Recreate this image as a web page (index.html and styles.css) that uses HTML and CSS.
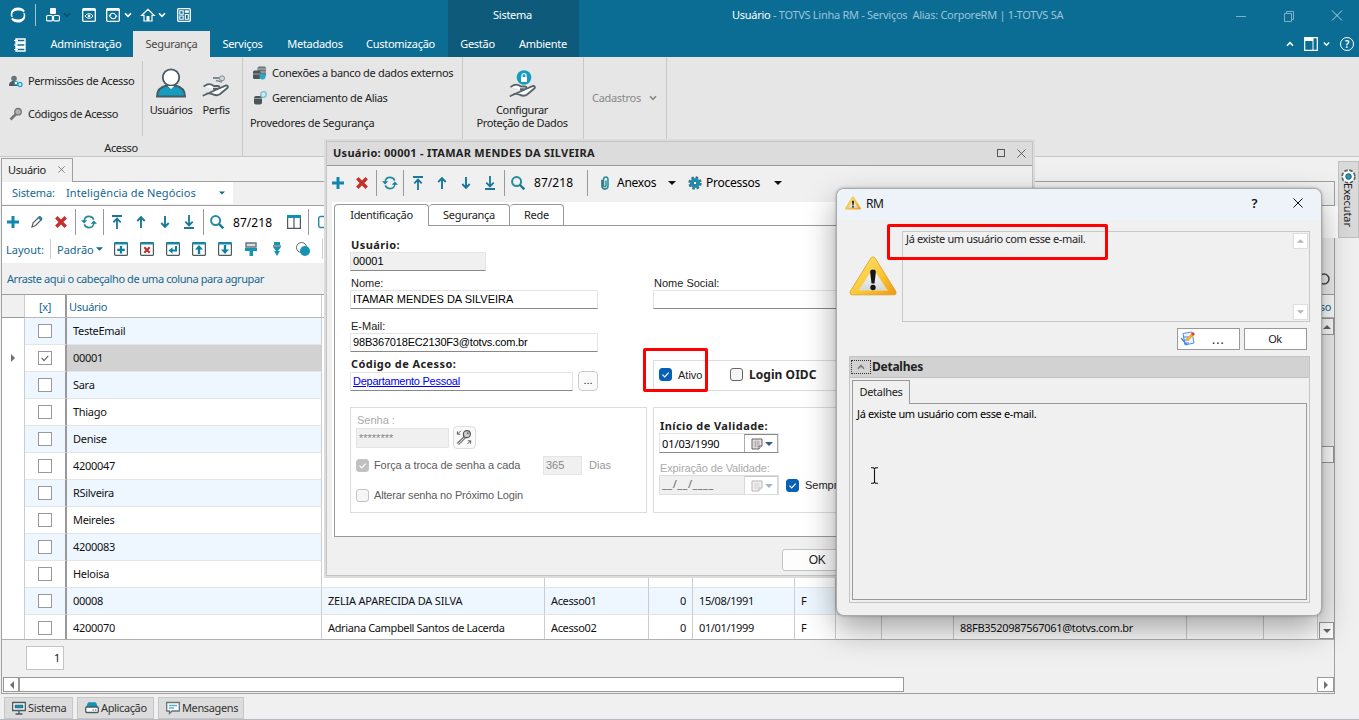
FILE: index.html
```html
<!DOCTYPE html>
<html lang="pt-BR">
<head>
<meta charset="utf-8">
<title>TOTVS Linha RM - Serviços</title>
<link rel="stylesheet" href="styles.css">
</head>
<body>
<svg class="defs" width="0" height="0">
  <symbol id="chev" viewBox="0 0 8 6"><path d="M1 1.2 4 4.4 7 1.2" fill="none" stroke="currentColor" stroke-width="1.6"/></symbol>
  <symbol id="tri" viewBox="0 0 8 4"><path d="M0 0h8L4 4z" fill="currentColor"/></symbol>
  <symbol id="plus" viewBox="0 0 12 12"><path d="M6 0v12M0 6h12" stroke="#1186ae" stroke-width="3"/></symbol>
  <symbol id="del" viewBox="0 0 12 12"><path d="M1.3 1.3l9.4 9.4M10.7 1.3l-9.4 9.4" stroke="#c4302b" stroke-width="3.4"/></symbol>
  <symbol id="sync" viewBox="0 0 16 14"><g fill="none" stroke="#258c9c" stroke-width="1.6"><path d="M3.200 6C3.400 3 5.500 1.400 8 1.400c2.300 0 4 1.300 4.700 3.200M12.800 8C12.600 11 10.500 12.600 8 12.600c-2.300 0-4-1.300-4.700-3.200"/></g><path d="M0 5.200h6.300L3.100 8.400zM16 8.800H9.700l3.200-3.200z" fill="#1b7fa0"/></symbol>
  <symbol id="up" viewBox="0 0 12 14"><path d="M6 13V2.500M2.300 6 6 2.200 9.700 6" fill="none" stroke="#1a7799" stroke-width="1.900"/></symbol>
  <symbol id="down" viewBox="0 0 12 14"><path d="M6 1v10.500M2.300 8 6 11.800 9.700 8" fill="none" stroke="#1a7799" stroke-width="1.900"/></symbol>
  <symbol id="top" viewBox="0 0 12 14"><path d="M1 1h10M6 14V4M2.300 7.300 6 3.600l3.700 3.700" fill="none" stroke="#1a7799" stroke-width="1.800"/></symbol>
  <symbol id="bottom" viewBox="0 0 12 14"><path d="M1 13h10M6 0v10M2.300 6.700 6 10.400l3.700-3.700" fill="none" stroke="#1a7799" stroke-width="1.800"/></symbol>
  <symbol id="search" viewBox="0 0 14 14"><circle cx="5.600" cy="5.600" r="4.500" fill="none" stroke="#258c9c" stroke-width="2"/><path d="m9 9 4.300 4.300" stroke="#1a7799" stroke-width="2.400"/></symbol>
  <symbol id="frame" viewBox="0 0 14 14"><rect x=".6" y=".6" width="12.800" height="12.800" rx="1" fill="#fff" stroke="#4a5a5e" stroke-width="1.200"/><path d="M0 1.500h14" stroke="#0f8fb4" stroke-width="2"/></symbol>
  <symbol id="hand" viewBox="0 0 28 14"><path d="M1.500 3.500 5 1.500C8 .5 10 1.500 12 3h4c2 .3 2 2.600 0 2.800h-5M17 5.500l6.500-2.800c2-.6 3 1 1.800 2.300l-7.500 6.300c-1.600 1-4 1.200-6.500.2C8 10 6.500 9.500 4.500 11l-3 1.500z" fill="#fff" stroke="#566468" stroke-width="1.900" stroke-linejoin="round"/></symbol>
  <symbol id="gear" viewBox="0 0 14 14"><circle cx="7" cy="7" r="5.500" fill="none" stroke="currentColor" stroke-width="2.400" stroke-dasharray="2.520 1.800"/><circle cx="7" cy="7" r="5.100" fill="#158fb6"/><circle cx="7" cy="7" r="1.800" fill="#fff" stroke="#34525e" stroke-width=".8"/></symbol>
  <symbol id="check" viewBox="0 0 13 13"><path d="m3.500 6.600 2.200 2.200 4-4.200" fill="none" stroke="currentColor" stroke-width="1.200"/></symbol>
  <symbol id="close" viewBox="0 0 10 10"><path d="m.5.5 9 9m0-9-9 9" stroke="currentColor" stroke-width="1"/></symbol>
  <symbol id="calendar" viewBox="0 0 12 12"><path d="M1 1h10v7l-3 3H1z" fill="#e6e2e2" stroke="#6b5f66"/><path d="M2.500 4h6.500M2.500 6h6.500M2.500 8h5M4.500 2.500v7M7 2.500v7" stroke="#999" stroke-width=".6"/><path d="M8 11V8h3" fill="#fff" stroke="#6b5f66"/></symbol>
  <symbol id="warn" viewBox="0 0 48 40">
    <linearGradient id="gold" x2="1" y2="1"><stop stop-color="#ffe779"/><stop offset=".55" stop-color="#fbc838"/><stop offset="1" stop-color="#ee9a10"/></linearGradient>
    <linearGradient id="pearl" x2="0" y2="1"><stop stop-color="#fff"/><stop offset="1" stop-color="#d4d7da"/></linearGradient>
    <path d="M24 1c1.300 0 2 .8 2.700 2L46.500 35c1.300 2.200.4 3.800-2 3.800h-41c-2.400 0-3.300-1.600-2-3.800L21.300 3C22 1.800 22.700 1 24 1z" fill="url(#gold)" stroke="#d99b1c" stroke-width=".8"/>
    <path d="M24 12 38.500 34.500h-29z" fill="url(#pearl)" stroke="#f6d36b" stroke-width=".6"/>
    <path d="M24 13.500c2.300 0 3 1.200 2.800 3.200l-1.300 10.800h-3l-1.300-10.800c-.2-2 .5-3.200 2.800-3.200z" fill="#161616"/><circle cx="24" cy="31.500" r="2.700" fill="#161616"/>
  </symbol>
</svg>

<div class="app">
  <header class="header">
    <div class="head-left">
      <div class="quick">
        <svg class="q-logo" viewBox="0 0 16 16"><path d="M1.300 4C3 1.500 5.200.4 8 .4s5.300 1.100 6.700 3.300L14 5.300C12 4 10.200 3.600 8 3.600 5.300 3.600 3 4.400 2.300 7c-.2 1.300 0 2.300.6 3.300L1 9.500C.6 7.500.7 5.700 1.300 4z" fill="#fff"/><path d="M14.700 12c-1.700 2.500-3.900 3.600-6.700 3.600s-5.300-1.100-6.700-3.300L2 10.700c2 1.300 3.800 1.700 6 1.700 2.700 0 5-.8 5.700-3.400.2-1.300 0-2.300-.6-3.300l1.900.8c.4 2 .3 3.800-.3 5.500z" fill="#fff"/></svg>
        <i class="q-sep"></i>
        <svg class="q-cubes" viewBox="0 0 14 14"><rect x="4" y="0" width="6" height="6" rx="1" fill="#fff"/><rect x=".6" y="7.500" width="5.800" height="5.400" rx="1" fill="none" stroke="#fff" stroke-width="1.100"/><rect x="7.600" y="7.500" width="5.800" height="5.400" rx="1" fill="none" stroke="#fff" stroke-width="1.100"/></svg>
        <svg class="q-chev dark"><use href="#chev"/></svg>
        <svg class="q-eye" viewBox="0 0 14 14"><rect x=".7" y=".7" width="12.600" height="12.600" rx="1" fill="none" stroke="#fff" stroke-width="1.300"/><path d="M1 1.700h12" stroke="#fff" stroke-width="2.200"/><path d="M3 8c2-3 6-3 8 0-2 3-6 3-8 0z" fill="none" stroke="#fff"/><circle cx="7" cy="8" r="1.300" fill="#fff"/></svg>
        <svg class="q-sync" viewBox="0 0 14 14"><rect x=".7" y=".7" width="12.600" height="12.600" rx="1" fill="none" stroke="#fff" stroke-width="1.300"/><path d="M1 1.700h12" stroke="#fff" stroke-width="2.200"/><path d="M4 8c0-3.500 4.500-3.500 5.500-1M10 8c0 3.500-4.500 3.500-5.500 1" fill="none" stroke="#fff" stroke-width="1.100"/><path d="M2.300 7.500h3L4 9.300zM8.700 8.500h3L10 6.700z" fill="#fff"/></svg>
        <svg class="q-chev"><use href="#chev"/></svg>
        <svg class="q-home" viewBox="0 0 14 14"><path d="M.8 7.300 7 1.300l6.200 6H11V13H3V7.300z" fill="none" stroke="#fff" stroke-width="1.200"/><path d="M5.500 13V8h3v5z" fill="#fff"/></svg>
        <svg class="q-chev"><use href="#chev"/></svg>
        <svg class="q-grid" viewBox="0 0 14 14"><rect x=".7" y=".7" width="12.600" height="12.600" rx="1" fill="none" stroke="#fff" stroke-width="1.300"/><path d="M2.800 2.800h3.400v3.400H2.800zM2.800 8h3.400v3.200H2.800zM8.300 6.500h3v4.700h-3z" fill="none" stroke="#fff" stroke-width="1.100"/><path d="M7.800 2.300h4v2.500h-4z" fill="#fff"/></svg>
      </div>
      <nav class="tabs">
        <span class="tab-menu"><svg viewBox="0 0 12 14"><path d="M2 1h9v3H2zM2 5.500h9v3H2zM2 10h9v3H2z" fill="none" stroke="#fff" stroke-width="1.400"/><path d="M0 2.500h4M0 7h4M0 11.500h4" stroke="#fff" stroke-width="1.200"/></svg></span>
        <span class="tab w-adm">Administração</span><span class="tab w-seg on">Segurança</span><span class="tab w-ser">Serviços</span><span class="tab w-met">Metadados</span><span class="tab w-cus">Customização</span>
      </nav>
    </div>
    <div class="context">
      <div class="context-title">Sistema</div>
      <nav class="tabs"><span class="tab w-ges">Gestão</span><span class="tab w-amb">Ambiente</span></nav>
    </div>
    <div class="head-right">
      <div class="titlebar">
        <div class="title"><b>Usuário</b> - TOTVS Linha RM - Serviços &nbsp;Alias: CorporeRM | 1-TOTVS SA</div>
        <svg class="win" viewBox="0 0 12 12"><path d="M1 6.500h10" stroke="currentColor"/></svg>
        <svg class="win" viewBox="0 0 12 12"><path d="M1.500 3.500h7v8h-7zM3.500 3V1.500h7v8H9" fill="none" stroke="currentColor"/></svg>
        <svg class="win big" viewBox="0 0 12 12"><path d="m1 1 10 10M11 1 1 11" stroke="currentColor"/></svg>
      </div>
      <div class="tools">
        <svg class="q-chev flip"><use href="#chev"/></svg>
        <svg class="t-pane" viewBox="0 0 14 14"><path d="M.7.700h12.600v12.600H.7z" fill="none" stroke="#fff" stroke-width="1.200"/><path d="M1 1h8v3H1z" fill="#fff"/><path d="M9 1v12" stroke="#fff"/></svg>
        <svg class="q-chev small"><use href="#chev"/></svg>
        <span class="help">?</span>
      </div>
    </div>
  </header>

  <section class="ribbon">
    <div class="group g-access">
      <div class="access-body">
        <div class="access-list">
          <div class="cmd"><svg viewBox="0 0 14 14"><circle cx="5" cy="4.500" r="2.800" fill="#68767a"/><path d="M0 12c0-4 2-5 5-5s4 1 4 5z" fill="#4e5c60"/><circle cx="7" cy="9" r="1.800" fill="#fff" stroke="#24a3c8"/><circle cx="11" cy="10.500" r="2" fill="#dff" stroke="#24a3c8" stroke-width="1.300"/></svg>Permissões de Acesso</div>
          <div class="cmd"><svg viewBox="0 0 14 14"><path d="m1.500 12.500 6-6" stroke="#6f777a" stroke-width="2.600"/><circle cx="9" cy="4.700" r="3.200" fill="#b4b4b4" stroke="#777" stroke-width="1.400"/></svg>Códigos de Acesso</div>
        </div>
        <i class="vsep"></i>
        <div class="big w-users"><svg class="user" viewBox="0 0 30 30"><path d="M1 28.500C1 21 6 18.500 11 17.500c2 2.500 6 2.500 8 0 5 1 10 3.500 10 11z" fill="#159cbf" stroke="#455a61" stroke-width="1.900"/><circle cx="15" cy="9.500" r="8.200" fill="#fff" stroke="#455a61" stroke-width="1.800"/><path d="m11.500 18 3.500 3 3.500-3z" fill="#fff"/></svg>Usuários</div>
        <div class="big w-perfis"><svg class="perfis" viewBox="0 0 28 22"><path d="M11 3h7" stroke="#7f8b8f" stroke-width="2"/><circle cx="20" cy="3.300" r="2.500" fill="#d4dadb" stroke="#7f8b8f"/><path d="m14 5.500 6 1.500" stroke="#7f8b8f" stroke-width="1.500"/><use href="#hand" y="8" width="28" height="14"/></svg>Perfis</div>
      </div>
      <div class="group-name">Acesso</div>
    </div>
    <div class="group g-conn">
      <div class="cmd"><svg viewBox="0 0 14 14"><rect x="4.500" y=".5" width="8.500" height="10" rx="1.500" fill="#69767a"/><path d="M5 3h8M5 6h8" stroke="#ccc" stroke-width=".8"/><rect y="4.500" width="7.500" height="8.500" rx="1.500" fill="#48565a"/><path d="M0 8h7" stroke="#bbb" stroke-width=".8"/><circle cx="9.500" cy="10.500" r="3" fill="#2aa7cb"/></svg>Conexões a banco de dados externos</div>
      <div class="cmd"><svg viewBox="0 0 14 14"><rect x="1" y="5" width="8" height="8.500" rx="2" fill="#48565a"/><path d="M1 7.500h8" stroke="#aaa" stroke-width=".8"/><circle cx="10.500" cy="3.500" r="2.800" fill="#cfe7ee" stroke="#78bfd5" stroke-width="1.300"/></svg>Gerenciamento de Alias</div>
      <div class="cmd noicon">Provedores de Segurança</div>
    </div>
    <div class="group g-prot">
      <svg viewBox="0 0 28 28"><circle cx="15" cy="7.500" r="7.300" fill="#159cbf"/><path d="M12 7h6v5h-6z" fill="#fff"/><path d="M13 7V5.500c0-2.500 4-2.500 4 0V7" fill="none" stroke="#fff" stroke-width="1.200"/><use href="#hand" y="13.500" width="28" height="14"/></svg>
      <div>Configurar<br>Proteção de Dados</div>
    </div>
    <div class="group g-cad">Cadastros<svg class="q-chev"><use href="#chev"/></svg></div>
  </section>

  <div class="body">
    <div class="doc">
      <div class="doc-tabs"><div class="doc-tab">Usuário<svg><use href="#close"/></svg></div><i></i></div>
      <main class="panel">
        <div class="system"><div class="combo"><span>Sistema:</span><span class="combo-value">Inteligência de Negócios</span><svg class="tri"><use href="#tri"/></svg></div></div>
        <div class="toolbar">
          <svg class="i12"><use href="#plus"/></svg>
          <svg class="i14 m-edit" viewBox="0 0 14 14"><path d="m2 12 1-4 6-6c1-1 3.500 1.200 2.500 2.500l-6 6z" fill="#fff" stroke="#566468" stroke-width="1.200"/><path d="m8 3 3 3 1.500-2L10 1.500z" fill="#1a86a8"/></svg>
          <svg class="i12 m-del"><use href="#del"/></svg><i class="vs a"></i>
          <svg class="i16"><use href="#sync"/></svg><i class="vs b"></i>
          <svg class="nav"><use href="#top"/></svg><svg class="nav"><use href="#up"/></svg><svg class="nav"><use href="#down"/></svg><svg class="nav"><use href="#bottom"/></svg><i class="vs c"></i>
          <svg class="i14"><use href="#search"/></svg><span class="count">87/218</span>
          <svg class="i14 m-cols" viewBox="0 0 14 14"><path d="M.6.600h12.800v12.800H.6zM7 0v14" fill="#fff" stroke="#4a5a5e" stroke-width="1.200"/><path d="M0 1.500h14" stroke="#0f8fb4" stroke-width="3"/></svg><i class="vs d"></i>
          <svg class="i14" viewBox="0 0 14 14"><rect x=".7" y="1.500" width="12" height="11" rx="2" fill="none" stroke="#258c9c" stroke-width="1.400"/></svg>
        </div>
        <div class="toolbar layout">
          <span>Layout:</span><i class="lsep"></i><span class="padrao">Padrão</span><svg class="tri small"><use href="#tri"/></svg>
          <svg class="lay" viewBox="0 0 14 14"><use href="#frame"/><path d="M7 4v7.500M3.200 7.800h7.600" stroke="#0f7f9f" stroke-width="2.300"/></svg>
          <svg class="lay" viewBox="0 0 14 14"><use href="#frame"/><path d="m4.300 5.300 5.400 5.400m0-5.400-5.400 5.400" stroke="#c4302b" stroke-width="2.200"/></svg>
          <svg class="lay" viewBox="0 0 14 14"><use href="#frame"/><path d="M10 4v4.500H5" fill="none" stroke="#0f7f9f" stroke-width="2"/><path d="m2.500 8.500 4-3.300v6.600z" fill="#0f7f9f"/></svg>
          <svg class="lay" viewBox="0 0 14 14"><use href="#frame"/><path d="M7 12V6" stroke="#0f7f9f" stroke-width="2.400"/><path d="m7 3 4 4.500H3z" fill="#0f7f9f"/></svg>
          <svg class="lay" viewBox="0 0 14 14"><use href="#frame"/><path d="M7 3v6" stroke="#0f7f9f" stroke-width="2.400"/><path d="m7 12 4-4.500H3z" fill="#0f7f9f"/></svg>
          <svg class="lay" viewBox="0 0 14 14"><path d="M2 1h10v4H2z" fill="#ddd" stroke="#667478" stroke-width="1.400"/><path d="M1 6h12v3H9v5H5.500V9H1z" fill="#1593b5"/></svg>
          <svg class="lay" viewBox="0 0 14 14"><path d="M4 0h6v3H4zM3 5h8L8 9h2l-3 5-3-5h2z" fill="#1593b5"/><path d="M3 4h8" stroke="#667478" stroke-width="1.500"/></svg>
          <svg class="lay" viewBox="0 0 14 14"><circle cx="5.500" cy="5.500" r="5" fill="#fff" stroke="#566468"/><circle cx="9" cy="9" r="5" fill="#1593b5"/></svg><i class="lsep e"></i>
        </div>
        <div class="group-panel"><span>Arraste aqui o cabeçalho de uma coluna para agrupar</span><svg class="i14" viewBox="0 0 14 14"><circle cx="7" cy="7" r="5" fill="none" stroke="#444" stroke-width="1.500"/></svg></div>
        <div class="table">
          <div class="row head"><div class="c0"></div><div class="c1">[x]</div><div class="c2">Usuário</div><div class="last">so</div></div>
          <div class="rows-wrap">
            <div class="rows">
              <div class="row odd"><div class="c0"></div><div class="c1"><i class="cb"></i></div><div class="c2">TesteEmail</div></div>
              <div class="row sel"><div class="c0"><svg viewBox="0 0 4 8"><path d="M0 0v8l4-4z" fill="#707070"/></svg></div><div class="c1"><i class="cb"><svg viewBox="0 0 13 13"><path d="m3 6.500 2.500 2.800L10 4.300" fill="none" stroke="#666" stroke-width="1.300"/></svg></i></div><div class="c2">00001</div></div>
              <div class="row odd"><div class="c0"></div><div class="c1"><i class="cb"></i></div><div class="c2">Sara</div></div>
              <div class="row"><div class="c0"></div><div class="c1"><i class="cb"></i></div><div class="c2">Thiago</div></div>
              <div class="row odd"><div class="c0"></div><div class="c1"><i class="cb"></i></div><div class="c2">Denise</div></div>
              <div class="row"><div class="c0"></div><div class="c1"><i class="cb"></i></div><div class="c2">4200047</div></div>
              <div class="row odd"><div class="c0"></div><div class="c1"><i class="cb"></i></div><div class="c2">RSilveira</div></div>
              <div class="row"><div class="c0"></div><div class="c1"><i class="cb"></i></div><div class="c2">Meireles</div></div>
              <div class="row odd"><div class="c0"></div><div class="c1"><i class="cb"></i></div><div class="c2">4200083</div></div>
              <div class="row"><div class="c0"></div><div class="c1"><i class="cb"></i></div><div class="c2">Heloisa</div><div></div><div></div><div></div><div></div><div></div><div></div><div></div><div></div><div></div><div></div></div>
              <div class="row odd"><div class="c0"></div><div class="c1"><i class="cb"></i></div><div class="c2">00008</div><div class="cell-zelia">ZELIA APARECIDA DA SILVA</div><div>Acesso01</div><div class="num">0</div><div>15/08/1991</div><div>F</div><div></div><div></div><div></div><div></div><div></div></div>
              <div class="row"><div class="c0"></div><div class="c1"><i class="cb"></i></div><div class="c2">4200070</div><div class="cell-name">Adriana Campbell Santos de Lacerda</div><div>Acesso02</div><div class="num">0</div><div>01/01/1999</div><div>F</div><div></div><div></div><div class="cell-mail">88FB3520987567061@totvs.com.br</div><div></div><div></div></div>
            </div>
            <div class="vscroll"><i class="sb"><svg class="tri flip"><use href="#tri"/></svg></i><i class="thumb"></i><i class="sb"><svg class="tri"><use href="#tri"/></svg></i></div>
          </div>
        </div>
        <div class="foot"><div class="total">1</div></div>
        <div class="hscroll"><i class="sb"><svg viewBox="0 0 4 8"><path d="M4 0v8L0 4z" fill="#707070"/></svg></i><i class="hthumb"></i><i class="sb"><svg viewBox="0 0 4 8"><path d="M0 0v8l4-4z" fill="#707070"/></svg></i></div>
      </main>
      <div class="bottom">
        <div class="btab b1"><svg viewBox="0 0 14 14"><path d="M.7 1.500h12.600v8H.7z" fill="#fff" stroke="#4a5a5e" stroke-width="1.300"/><path d="M3 4h8v3H3z" fill="#1593b5" stroke="#34525e" stroke-width=".6"/><path d="M7 10v2.500M3.500 13h7" stroke="#4a5a5e" stroke-width="1.300"/></svg>Sistema</div>
        <div class="btab b2"><svg viewBox="0 0 14 14"><path d="m2.500 2.500 1-1.200h7l1 1.200 1.500 4H1z" fill="#1593b5"/><rect x=".7" y="6" width="12.600" height="5.500" rx="1" fill="#fff" stroke="#4a5a5e" stroke-width="1.300"/><path d="M7.500 9h1.300M10 9h1.300" stroke="#444" stroke-width="1.200"/></svg>Aplicação</div>
        <div class="btab b3"><svg viewBox="0 0 14 14"><path d="M.7 1.500h12.600v8.500H6l-2.500 2.500V10H.7z" fill="#fff" stroke="#667478" stroke-width="1.300"/><path d="M3 4.500h8M3 7h5" stroke="#5db3cc" stroke-width="1.500"/></svg>Mensagens</div>
      </div>
    </div>
    <aside class="side"><div class="exec"><svg viewBox="0 0 16 16"><circle cx="8" cy="8" r="6.300" fill="#fff" stroke="#566468" stroke-width="2.800" stroke-dasharray="3.400 1.550"/><circle cx="8" cy="8" r="5.900" fill="#fff"/><circle cx="8" cy="8" r="3" fill="#159cbf" stroke="#34525e"/></svg><span>Executar</span></div></aside>
  </div>
</div>

<section class="window">
  <div class="w-title"><b>Usuário: 00001 - ITAMAR MENDES DA SILVEIRA</b><i class="max"></i><svg><use href="#close"/></svg></div>
  <div class="toolbar w-tools">
    <svg class="i12"><use href="#plus"/></svg><svg class="i12 w-del"><use href="#del"/></svg><i class="vs a2"></i>
    <svg class="i16"><use href="#sync"/></svg><i class="vs a2"></i>
    <svg class="nav"><use href="#top"/></svg><svg class="nav"><use href="#up"/></svg><svg class="nav"><use href="#down"/></svg><svg class="nav"><use href="#bottom"/></svg><i class="vs c2"></i>
    <svg class="i14"><use href="#search"/></svg><span class="count">87/218</span><i class="vs d2"></i>
    <svg class="clip" viewBox="0 0 12 14"><path d="M3 4v6c0 4 6 4 6 0V3.500C9 0 4.500 0 4.500 3.500V9.500c0 1.500 2.500 1.500 2.500 0V4.500" fill="none" stroke="#258c9c" stroke-width="1.500"/><path d="M3 3.500v6.800c0 2 2 3 3 3" fill="none" stroke="#566468"/></svg>
    <span class="t12 anex">Anexos</span><svg class="tri black"><use href="#tri"/></svg>
    <svg class="i14 pgear"><use href="#gear"/></svg><span class="t12 proc">Processos</span><svg class="tri black"><use href="#tri"/></svg>
  </div>
  <div class="w-body">
    <div class="w-tabs"><span class="wt t1 on">Identificação</span><span class="wt t2">Segurança</span><span class="wt t3">Rede</span><i></i></div>
    <div class="form">
      <div class="col-a">
        <label class="bold">Usuário:</label><div class="in ro w134">00001</div>
        <label class="l2">Nome:</label><div class="in">ITAMAR MENDES DA SILVEIRA</div>
        <label class="l3">E-Mail:</label><div class="in mail">98B367018EC2130F3@totvs.com.br</div>
        <label class="bold l4">Código de Acesso:</label>
        <div class="line"><div class="in w221"><u>Departamento Pessoal</u></div><span class="dots">...</span></div>
        <div class="box senha">
          <div class="dim">Senha :</div>
          <div class="line s1"><div class="in ro w92 pw">********</div><span class="keybtn"><svg viewBox="0 0 18 18"><path d="m2 16 8-8" stroke="#555" stroke-width="3"/><path d="m2 16 8-8" stroke="#ddd" stroke-width="1.200"/><circle cx="11.500" cy="5.500" r="3.700" fill="#ccc" stroke="#555" stroke-width="1.300"/><circle cx="12.500" cy="4.500" r="1" fill="#666"/><path d="M5 2 1.500 5.500V2.500m0 3h3M12 16l3.500-3.500h-3m3 0v3" fill="none" stroke="#555"/></svg></span></div>
          <div class="line s2"><i class="cbx dis on"><svg><use href="#check"/></svg></i><span class="grey forca">Força a troca de senha a cada</span><div class="in ro w38">365</div><span class="dias">Dias</span></div>
          <div class="line s3"><i class="cbx dis"></i><span class="grey alterar">Alterar senha no Próximo Login</span></div>
        </div>
      </div>
      <div class="col-b">
        <label>Nome Social:</label><div class="in"></div>
        <div class="box ativo"><i class="cbx on"><svg><use href="#check"/></svg></i><span class="at">Ativo</span><i class="cbx"></i><b class="oidc">Login OIDC</b></div>
        <div class="box valid">
          <label class="bold">Início de Validade:</label>
          <div class="date"><span>01/03/1990</span><em><svg class="cal"><use href="#calendar"/></svg><svg class="tri blue"><use href="#tri"/></svg></em></div>
          <div class="dim exp">Expiração de Validade:</div>
          <div class="line"><div class="date off"><span>__/__/____</span><em><svg class="cal"><use href="#calendar"/></svg><svg class="tri blue"><use href="#tri"/></svg></em></div><i class="cbx on"><svg><use href="#check"/></svg></i><span class="semp">Sempre</span></div>
        </div>
      </div>
    </div>
  </div>
  <div class="w-foot"><span>OK</span></div>
</section>

<section class="dialog">
  <div class="d-title"><svg class="w16"><use href="#warn"/></svg><span class="rm">RM</span><span class="q">?</span><svg class="x"><use href="#close"/></svg></div>
  <div class="d-top">
    <svg class="w48"><use href="#warn"/></svg>
    <div class="msg"><span>Já existe um usuário com esse e-mail.</span><div class="msg-sb"><i><svg class="tri small flip"><use href="#tri"/></svg></i><i><svg class="tri small"><use href="#tri"/></svg></i></div></div>
  </div>
  <div class="d-btns">
    <span class="btn"><svg viewBox="0 0 16 16"><path d="M3 2.500 12 1l2 11-9 2z" fill="#eaf3ff" stroke="#5a8fdc"/><path d="m1 7 6 7M3 6h6M3 9h6M4 12h5" stroke="#4b86d8" stroke-width="1.200"/><path d="m7 9 5.500-5.500" stroke="#f2b01c" stroke-width="3"/><path d="m12 4 2-2" stroke="#e2452e" stroke-width="3"/></svg><em>...</em></span>
    <span class="btn ok">Ok</span>
  </div>
  <div class="details">
    <div class="det-head"><i><svg class="q-chev flip"><use href="#chev"/></svg></i><b>Detalhes</b></div>
    <div class="det-tabs"><span>Detalhes</span><i></i></div>
    <div class="det-body">Já existe um usuário com esse e-mail.</div>
  </div>
</section>
<div class="mark m1"></div>
<div class="mark m2"></div>
<svg class="cursor" viewBox="0 0 9 17"><path d="M1 .8h2.500l1 1 1-1H8M4.500 1.500v14M1 16.200h2.500l1-1 1 1H8" fill="none" stroke="#111" stroke-width="1.100"/></svg>
</body>
</html>
```

FILE: styles.css
```css
* { box-sizing: border-box; }
body { margin: 0; width: 1359px; height: 720px; overflow: hidden; position: relative; background: #f0f0f0; font: 11px/13px "Noto Sans", "Open Sans", sans-serif; letter-spacing: -.37px; color: #222; }
.defs { position: absolute; }
svg { display: block; flex: none; overflow: visible; }
i, em { font-style: normal; flex: none; }
span, label { white-space: nowrap; }
.app { width: 1359px; height: 720px; display: flex; flex-direction: column; border-bottom: 1px solid #b9b9c6; }

/* header */
.header { height: 57px; flex: none; display: flex; background: #0c6d94; color: #fff; letter-spacing: -.28px; }
.head-left { width: 448px; flex: none; }
.quick { height: 31px; display: flex; align-items: center; padding: 0 0 1px 10px; }
.q-logo { width: 16px; height: 16px; }
.q-sep { width: 1px; height: 22px; background: #9fc3d2; margin: 0 10px 0 9px; }
.quick svg:not(.q-chev):not(.q-logo) { width: 14px; height: 14px; }
.q-chev { width: 8px; height: 6px; }
.q-chev.dark { color: #084f6d; margin: 0 11px 0 3px; }
.q-sync { margin: 0 4px 0 10px; }
.quick .q-home { margin: 0 3px 0 10px; }
.quick .q-sync + .q-chev { margin-right: -1px; }
.q-grid { margin-left: 11px; }
.flip { transform: scaleY(-1); }
.tabs { height: 26px; display: flex; }
.tab { display: flex; justify-content: center; align-items: center; padding-bottom: 2px; }
.tab.on { background: #e6e6e6; color: #4c4444; }
.tab-menu { width: 39px; padding: 7px 0 0 14px; }
.tab-menu svg { width: 12px; height: 14px; }
.w-adm { width: 94px; } .w-seg { width: 77px; } .w-ser { width: 65px; } .w-met { width: 80px; } .w-cus { width: 91px; } .w-ges { width: 59px; } .w-amb { width: 72px; }
.context { width: 131px; flex: none; background: #0d5a7a; }
.context-title { height: 31px; line-height: 30px; text-align: center; padding-right: 2px; }
.head-right { flex: 1; min-width: 0; }
.titlebar { height: 31px; display: flex; align-items: center; color: #9bc4da; }
.title { width: 656px; flex: none; padding: 0 0 2px 153px; white-space: nowrap; }
.title b { font-weight: 400; color: #fff; }
.win { width: 12px; height: 12px; margin-right: 36px; color: #7fb0c8; }
.win.big { margin-right: 0; color: #b5d2df; }
.tools { height: 26px; display: flex; align-items: center; padding-left: 707px; }
.t-pane { width: 14px; height: 14px; margin: 0 5px 0 10px; }
.q-chev.small { width: 7px; }
.help { width: 14px; height: 14px; border: 1px solid #fff; border-radius: 50%; text-align: center; line-height: 12px; font-size: 10px; font-weight: 600; letter-spacing: 0; margin-left: 10px; }

/* ribbon */
.ribbon { height: 100px; flex: none; display: flex; background: #e6e6e6; border-bottom: 1px solid #c6c6c6; }
.group { border-right: 1px solid #c8c8c8; }
.g-access { width: 243px; }
.access-body { height: 82px; display: flex; padding-top: 4px; }
.access-list { width: 142px; padding: 3px 0 0 9px; }
.cmd { display: flex; align-items: center; }
.cmd svg { width: 14px; height: 14px; }
.access-list .cmd { height: 33px; gap: 5px; }
.vsep { width: 1px; height: 75px; background: #c8c8c8; }
.big { display: flex; flex-direction: column; align-items: center; justify-content: flex-end; height: 55px; }
.w-users { width: 56px; } .w-perfis { width: 34px; }
.user { width: 30px; height: 30px; margin-bottom: 5px; }
.perfis { width: 28px; height: 22px; margin-bottom: 6px; }
.group-name { text-align: center; line-height: 17px; }
.g-conn { width: 220px; padding: 3px 0 0 10px; }
.g-conn .cmd { height: 25px; gap: 5px; letter-spacing: -.32px; }
.g-conn .noicon { margin-left: -3px; }
.g-prot { width: 121px; text-align: center; padding: 13px 2px 0 0; }
.g-prot svg { width: 28px; height: 28px; margin: 0 auto 5px 46px; }
.g-cad { width: 83px; padding: 0 0 18px 8px; display: flex; align-items: center; color: #888; gap: 8px; letter-spacing: -.3px; }

/* document */
.body { flex: 1; display: flex; min-height: 0; }
.doc { width: 1335px; padding: 1px 0 0 1px; flex: none; }
.doc-tabs { display: flex; height: 24px; }
.doc-tab { width: 72px; border: 1px solid #a0a0a0; border-bottom: 0; padding: 0 0 3px 6px; display: flex; align-items: center; }
.doc-tab svg { width: 7px; height: 7px; color: #555; margin-left: 12px; }
.doc-tabs > i { flex: 1; border-bottom: 1px solid #a0a0a0; }
.panel { height: 512px; border: 1px solid #a0a0a0; border-top: 0; color: #111; }
.system { height: 24px; border-bottom: 1px solid #a0a0a0; }
.combo { width: 231px; height: 22px; background: #fff; display: flex; align-items: center; padding: 0 0 1px 10px; color: #14688f; letter-spacing: .12px; }
.combo > span:first-child { letter-spacing: -.1px; }
.combo-value { width: 153px; margin-left: 11px; }
.tri { width: 8px; height: 4px; }
.tri.small { width: 7px; height: 4px; }
.combo .tri { width: 6px; }
.toolbar { height: 32px; background: #fff; display: flex; align-items: center; padding-left: 5px; overflow: hidden; }
.panel .toolbar { width: 322px; }
.system + .toolbar { box-shadow: 1100px 0 #fff; }
.i12 { width: 12px; height: 12px; } .i14 { width: 14px; height: 14px; } .i16 { width: 16px; height: 14px; margin: 0 -1px; }
.vs { width: 1px; height: 26px; background: #999; }
.m-edit { margin: 0 11px; }
.vs.a { margin: 0 6px 0 8px; } .vs.b { margin: 0 7px; } .vs.c { margin-right: 6px; } .vs.d { margin: 0 9px 0 7px; }
.nav { width: 12px; height: 14px; margin-right: 12px; }
.toolbar .nav + .vs { margin-left: -4px; }
.count { font-size: 12px; letter-spacing: .05px; color: #000; margin-left: 9px; width: 41px; }
.m-cols { margin-left: 15px; }
.layout { height: 25px; padding: 0 0 3px 4px; color: #14688f; letter-spacing: 0; }
.layout > span:first-child { width: 38px; }
.lsep { width: 1px; height: 20px; background: #ccc; margin: 0 6px; }
.padrao { width: 38px; }
.layout .tri { margin: 0 11px 0 1px; }
.lay { width: 14px; height: 14px; margin-right: 12px; }
.lsep.e { margin: 0; }
.group-panel { height: 31px; display: flex; align-items: center; justify-content: space-between; padding: 0 3px 0 5px; color: #14688f; letter-spacing: -.41px; }
.table { border-top: 1px solid #a0a0a0; border-bottom: 1px solid #b0b0b0; height: 346px; background: #fff; overflow: hidden; }
.row { display: grid; grid-template-columns: 23px 42px 255px 223px 104px 44px 102px 41px 46px 72px 233px 77px 54px; height: 27px; }
.row > div { border-right: 1px solid #ccc; border-bottom: 1px solid #e4e4e4; padding: 0 0 1px 6px; display: flex; align-items: center; white-space: nowrap; }
.row > .c0 { background: #fff; border-bottom: 0; padding-left: 9px; }
.row > .c1 { border-right: 2px solid #999; justify-content: center; padding: 0; }
.row > .num { justify-content: flex-end; padding: 0 6px 1px 0; }
.row > .cell-zelia { letter-spacing: -.22px; }
.row > .cell-mail { letter-spacing: -.3px; }
.row > .c2 { letter-spacing: -.3px; }
.row.head { height: 23px; grid-template-columns: 23px 42px 255px 1fr; color: #14688f; }
.row.head > div { border-bottom-color: #b8b8b8; padding-bottom: 0; }
.row.head > .c0 { background: #f0f0f0; border-bottom: 1px solid #999; }
.row.head > .c2 { padding-left: 2px; }
.row.head > .last { justify-content: flex-end; border-right: 0; padding-right: 3px; }
.odd > div { background: #eef7ff; }
.sel > .c2 { background: #d2d2d2; }
.c0 svg { width: 4px; height: 8px; }
.cb { width: 14px; height: 14px; border: 1px solid #999; background: #fff; }
.cb svg { width: 12px; height: 12px; }
.rows-wrap { display: flex; height: 321px; }
.rows { width: 1317px; overflow: hidden; }
.vscroll { width: 15px; display: flex; flex-direction: column; background: #f0f0f0; }
.sb { width: 16px; height: 16px; border: 1px solid #999; background: #fff; display: flex; align-items: center; justify-content: center; color: #666; }
.vscroll .sb { width: 15px; height: 17px; }
.thumb { width: 15px; height: 17px; border: 1px solid #999; background: #fff; margin: 111px 0 159px; }
.foot { height: 37px; padding: 6px 0 0 24px; }
.total { width: 38px; height: 24px; border: 1px solid #c4c4c4; background: #fff; text-align: right; padding-right: 3px; line-height: 22px; }
.hscroll { height: 15px; display: flex; padding-left: 1px; }
.hscroll .sb { height: 15px; width: 17px; }
.hscroll svg { width: 4px; height: 8px; }
.hthumb { width: 886px; border: 1px solid #999; border-left-width: 2px; background: #fff; margin: 0 413px 0 -2px; }
.bottom { display: flex; gap: 4px; padding: 3px 0 0 3px; }
.btab { height: 22px; border: 1px solid #c6c6c6; background: #dcdcdc; display: flex; align-items: center; padding: 0 0 1px 7px; gap: 2px; color: #333; }
.btab svg { width: 14px; height: 14px; }
.b1 { width: 69px; } .b2 { width: 77px; } .b3 { width: 86px; }
.side { padding: 4px 0 0 3px; }
.exec { width: 21px; height: 77px; border: 1px solid #c0c0c0; background: #dadada; padding: 7px 0 0 2px; }
.exec svg { width: 15px; height: 15px; }
.exec span { writing-mode: vertical-rl; margin-top: -1px; display: block; letter-spacing: -.1px; line-height: 15px; }

/* user window */
.window { position: absolute; left: 324px; top: 139px; width: 711px; height: 439px; border: 2px solid #dcdcdc; background: #f0f0f0; box-shadow: inset 0 0 0 1px #c4c4c4; padding: 1px; }
.w-title { height: 24px; background: #dcdcdc; border-bottom: 1px solid #999; display: flex; align-items: center; padding: 0 6px 1px 6px; }
.w-title b { flex: 1; letter-spacing: .27px; padding-bottom: 1px; }
.max { width: 8px; height: 8px; border: 1px solid #555; margin-right: 12px; }
.w-title svg { width: 9px; height: 9px; color: #555; }
.w-tools { height: 36px; background: #f0f0f0; padding: 0 0 3px 5px; }
.w-del { margin-left: 12px; }
.vs.a2 { margin: 0 6px 0 8px; } .vs.a2 + .nav { margin-left: 2px; } .w-tools .i16 { margin-right: -3px; }
.vs.c2 { margin-right: 6px; } .vs.d2 { margin: 0 11px 0 12px; }
.clip { width: 12px; height: 14px; }
.t12 { font-size: 12px; letter-spacing: -.25px; color: #000; }
.anex { width: 42px; margin: 0 9px 0 6px; } .proc { width: 59px; margin: 0 9px 0 4px; }
.black { color: #111; }
.pgear { color: #3c6f82; margin-left: 12px; }
.w-body { height: 335px; margin-left: 5px; background: #fff; padding: 2px 0 0 2px; }
.w-tabs { display: flex; height: 22px; letter-spacing: -.3px; }
.wt { border: 1px solid #999; border-left: 0; border-radius: 4px 4px 0 0; display: flex; justify-content: center; align-items: center; padding-bottom: 1px; }
.wt.on { border-left: 1px solid #999; border-bottom: 0; padding-bottom: 2px; }
.t1 { width: 95px; } .t2 { width: 81px; } .t3 { width: 54px; }
.w-tabs > i { flex: 1; border-bottom: 1px solid #999; }
.form { height: 311px; border-left: 1px solid #999; border-bottom: 1px solid #999; padding: 12px 0 0 15px; display: flex; font-family: "Liberation Sans", Arial, sans-serif; letter-spacing: 0; }
.col-a { width: 303px; display: flex; flex-direction: column; }
.col-b { flex: 1; padding-top: 38px; display: flex; flex-direction: column; }
label { height: 14px; line-height: 15px; padding-left: 1px; }
label.bold { font-family: "Noto Sans", sans-serif; font-weight: 700; line-height: 13px; letter-spacing: .42px; }
.in { width: 248px; height: 19px; border: 1px solid #e4e4e4; border-bottom-color: #888; background: #fff; padding-left: 2px; line-height: 17px; color: #000; white-space: nowrap; overflow: hidden; }
.in.ro { background: #f0f0f0; }
.w134 { width: 136px; }
.l2 { margin-top: 5px; } .l3 { margin-top: 10px; }
.l4 { margin-top: 5px; }
.mail { letter-spacing: -.18px; }
.line { display: flex; align-items: center; }
.w221 { width: 223px; letter-spacing: -.25px; } .w92 { width: 93px; } .w38 { width: 39px; }
.in u { color: #00e; }
.w221.in { line-height: 16px; }
.dots { width: 20px; height: 20px; border: 1px solid #ccc; border-radius: 4px; background: #fafafa; margin-left: 5px; text-align: center; line-height: 17px; }
.box { border: 1px solid #dcdcdc; }
.senha { width: 297px; height: 106px; margin-top: 16px; padding: 6px 0 0 5px; }
.dim { color: #aaa; padding-left: 1px; height: 12px; }
.s1 .in, .s2 .in { border-bottom-color: #e4e4e4; color: #888; }
.s1 .in { height: 20px; line-height: 18px; } .s1 { height: 23px; }
.keybtn { width: 23px; height: 23px; border: 1px solid #ddd; border-radius: 4px; margin-left: 4px; padding: 2px; background: #fafafa; }
.keybtn svg { width: 17px; height: 17px; }
.s2 { margin-top: 6px; height: 20px; } .s3 { margin-top: 10px; height: 20px; }
.cbx { width: 13px; height: 13px; border: 1px solid #666; border-radius: 3px; background: #f6f6f6; color: #fff; }
.cbx svg { width: 13px; height: 13px; margin: -1px; }
.cbx.on { background: #0560b6; border-color: #0560b6; }
.cbx.dis { border-color: #c4c4c4; } .cbx.dis.on { background: #c0c0c0; }
.grey { color: #5c5c5c; margin-left: 5px; letter-spacing: -.1px; }
.alterar { letter-spacing: -.17px; }
.forca { width: 169px; }
.dias { color: #999; margin-left: 7px; }
.ativo { height: 31px; margin-top: 51px; padding: 0 0 2px 5px; display: flex; align-items: center; }
.at { width: 52px; margin-left: 6px; padding-top: 1px; }
.oidc { font: 700 12px "Noto Sans", sans-serif; margin-left: 6px; letter-spacing: .05px; }
.valid { height: 106px; margin-top: 16px; padding: 11px 0 0 5px; display: flex; flex-direction: column; }
.date { width: 120px; height: 20px; border: 1px solid #e4e4e4; border-bottom-color: #888; display: flex; align-items: center; color: #000; font-family: "Noto Sans", sans-serif; letter-spacing: -.1px; }
.date span { width: 84px; padding-left: 2px; }
.date em { width: 34px; height: 18px; border: 1px solid #aaa; border-bottom: 0; border-top-color: #888; display: flex; align-items: center; gap: 2px; padding-left: 6px; }
.cal { width: 12px; height: 12px; }
.blue { color: #355a8c; }
.exp { margin: 9px 0 1px; letter-spacing: -.12px; }
.date.off { border-color: #ddd; color: #666; }
.date.off span { background: #f0f0f0; height: 18px; line-height: 16px; letter-spacing: .45px; }
.date.off em { opacity: .45; }
.date + .cbx { margin-left: 7px; }
.semp { margin-left: 6px; }
.w-foot { padding: 12px 0 0 455px; font-family: "Liberation Sans", sans-serif; }
.w-foot span { display: block; width: 70px; height: 22px; border: 1px solid #c4c4c4; border-radius: 3px; background: #fdfdfd; text-align: center; line-height: 20px; font-size: 12px; }

/* message dialog */
.dialog { position: absolute; left: 836px; top: 188px; width: 486px; height: 428px; border: 1px solid #aaa; border-radius: 8px; background: #f0f0f0; box-shadow: 0 0 3px rgba(0,0,0,.3), 0 14px 32px rgba(0,0,0,.36); }
.d-title { height: 31px; background: #eef3fa; border-radius: 7px 7px 0 0; display: flex; align-items: center; padding: 0 18px 3px 8px; color: #111; }
.w16 { width: 16px; height: 14px; }
.rm { flex: 1; font-size: 12px; margin-left: 5px; }
.q { font-size: 13px; font-weight: 600; margin-right: 36px; }
.x { width: 10px; height: 10px; }
.d-top { display: flex; height: 102px; padding: 11px 0 0 12px; }
.w48 { width: 48px; height: 40px; margin-top: 25px; }
.msg { width: 408px; height: 91px; margin-left: 5px; border: 1px solid #c8c8c8; display: flex; justify-content: space-between; padding: 1px 1px 1px 3px; letter-spacing: -.36px; }
.msg > span { margin-top: -1px; }
.msg-sb { display: flex; flex-direction: column; justify-content: space-between; }
.msg-sb i { width: 15px; height: 16px; border: 1px solid #ddd; background: #fff; display: flex; align-items: center; justify-content: center; color: #b4b4b4; }
.d-btns { display: flex; gap: 4px; padding: 6px 0 0 340px; }
.btn { width: 63px; height: 22px; background: #fff; border: 1px solid #999; display: flex; align-items: center; padding-left: 2px; }
.btn svg { width: 16px; height: 16px; } .btn em { margin-left: 16px; letter-spacing: 1px; font-size: 12px; }
.btn.ok { justify-content: center; padding: 0 1px 1px 0; }
.details { width: 461px; height: 247px; margin: 6px 0 0 12px; border: 1px solid #c4c4c4; padding: 0 2px; }
.det-head { height: 21px; background: #d2d2d2; border-bottom: 1px solid #c0c0c0; margin: 0 -2px; display: flex; align-items: center; padding-left: 1px; }
.det-head i { width: 20px; height: 14px; border: 1px dotted #333; display: flex; align-items: center; justify-content: center; color: #777; margin-right: 1px; }
.det-head b { font-size: 12px; letter-spacing: -.25px; padding-bottom: 1px; }
.det-tabs { height: 26px; padding-top: 2px; display: flex; }
.det-tabs span { width: 58px; border: 1px solid #999; border-bottom: 0; text-align: center; line-height: 22px; letter-spacing: -.3px; }
.det-tabs i { flex: 1; border-bottom: 1px solid #999; }
.det-body { height: 196px; border: 1px solid #999; border-top: 0; padding: 3px 4px; color: #000; letter-spacing: -.36px; }

.mark { position: absolute; border: 3px solid #f00; border-radius: 2px; }
.m1 { left: 887px; top: 224px; width: 221px; height: 36px; }
.m2 { left: 643px; top: 348px; width: 65px; height: 44px; }
.cursor { position: absolute; left: 870px; top: 467px; width: 9px; height: 17px; }
```
